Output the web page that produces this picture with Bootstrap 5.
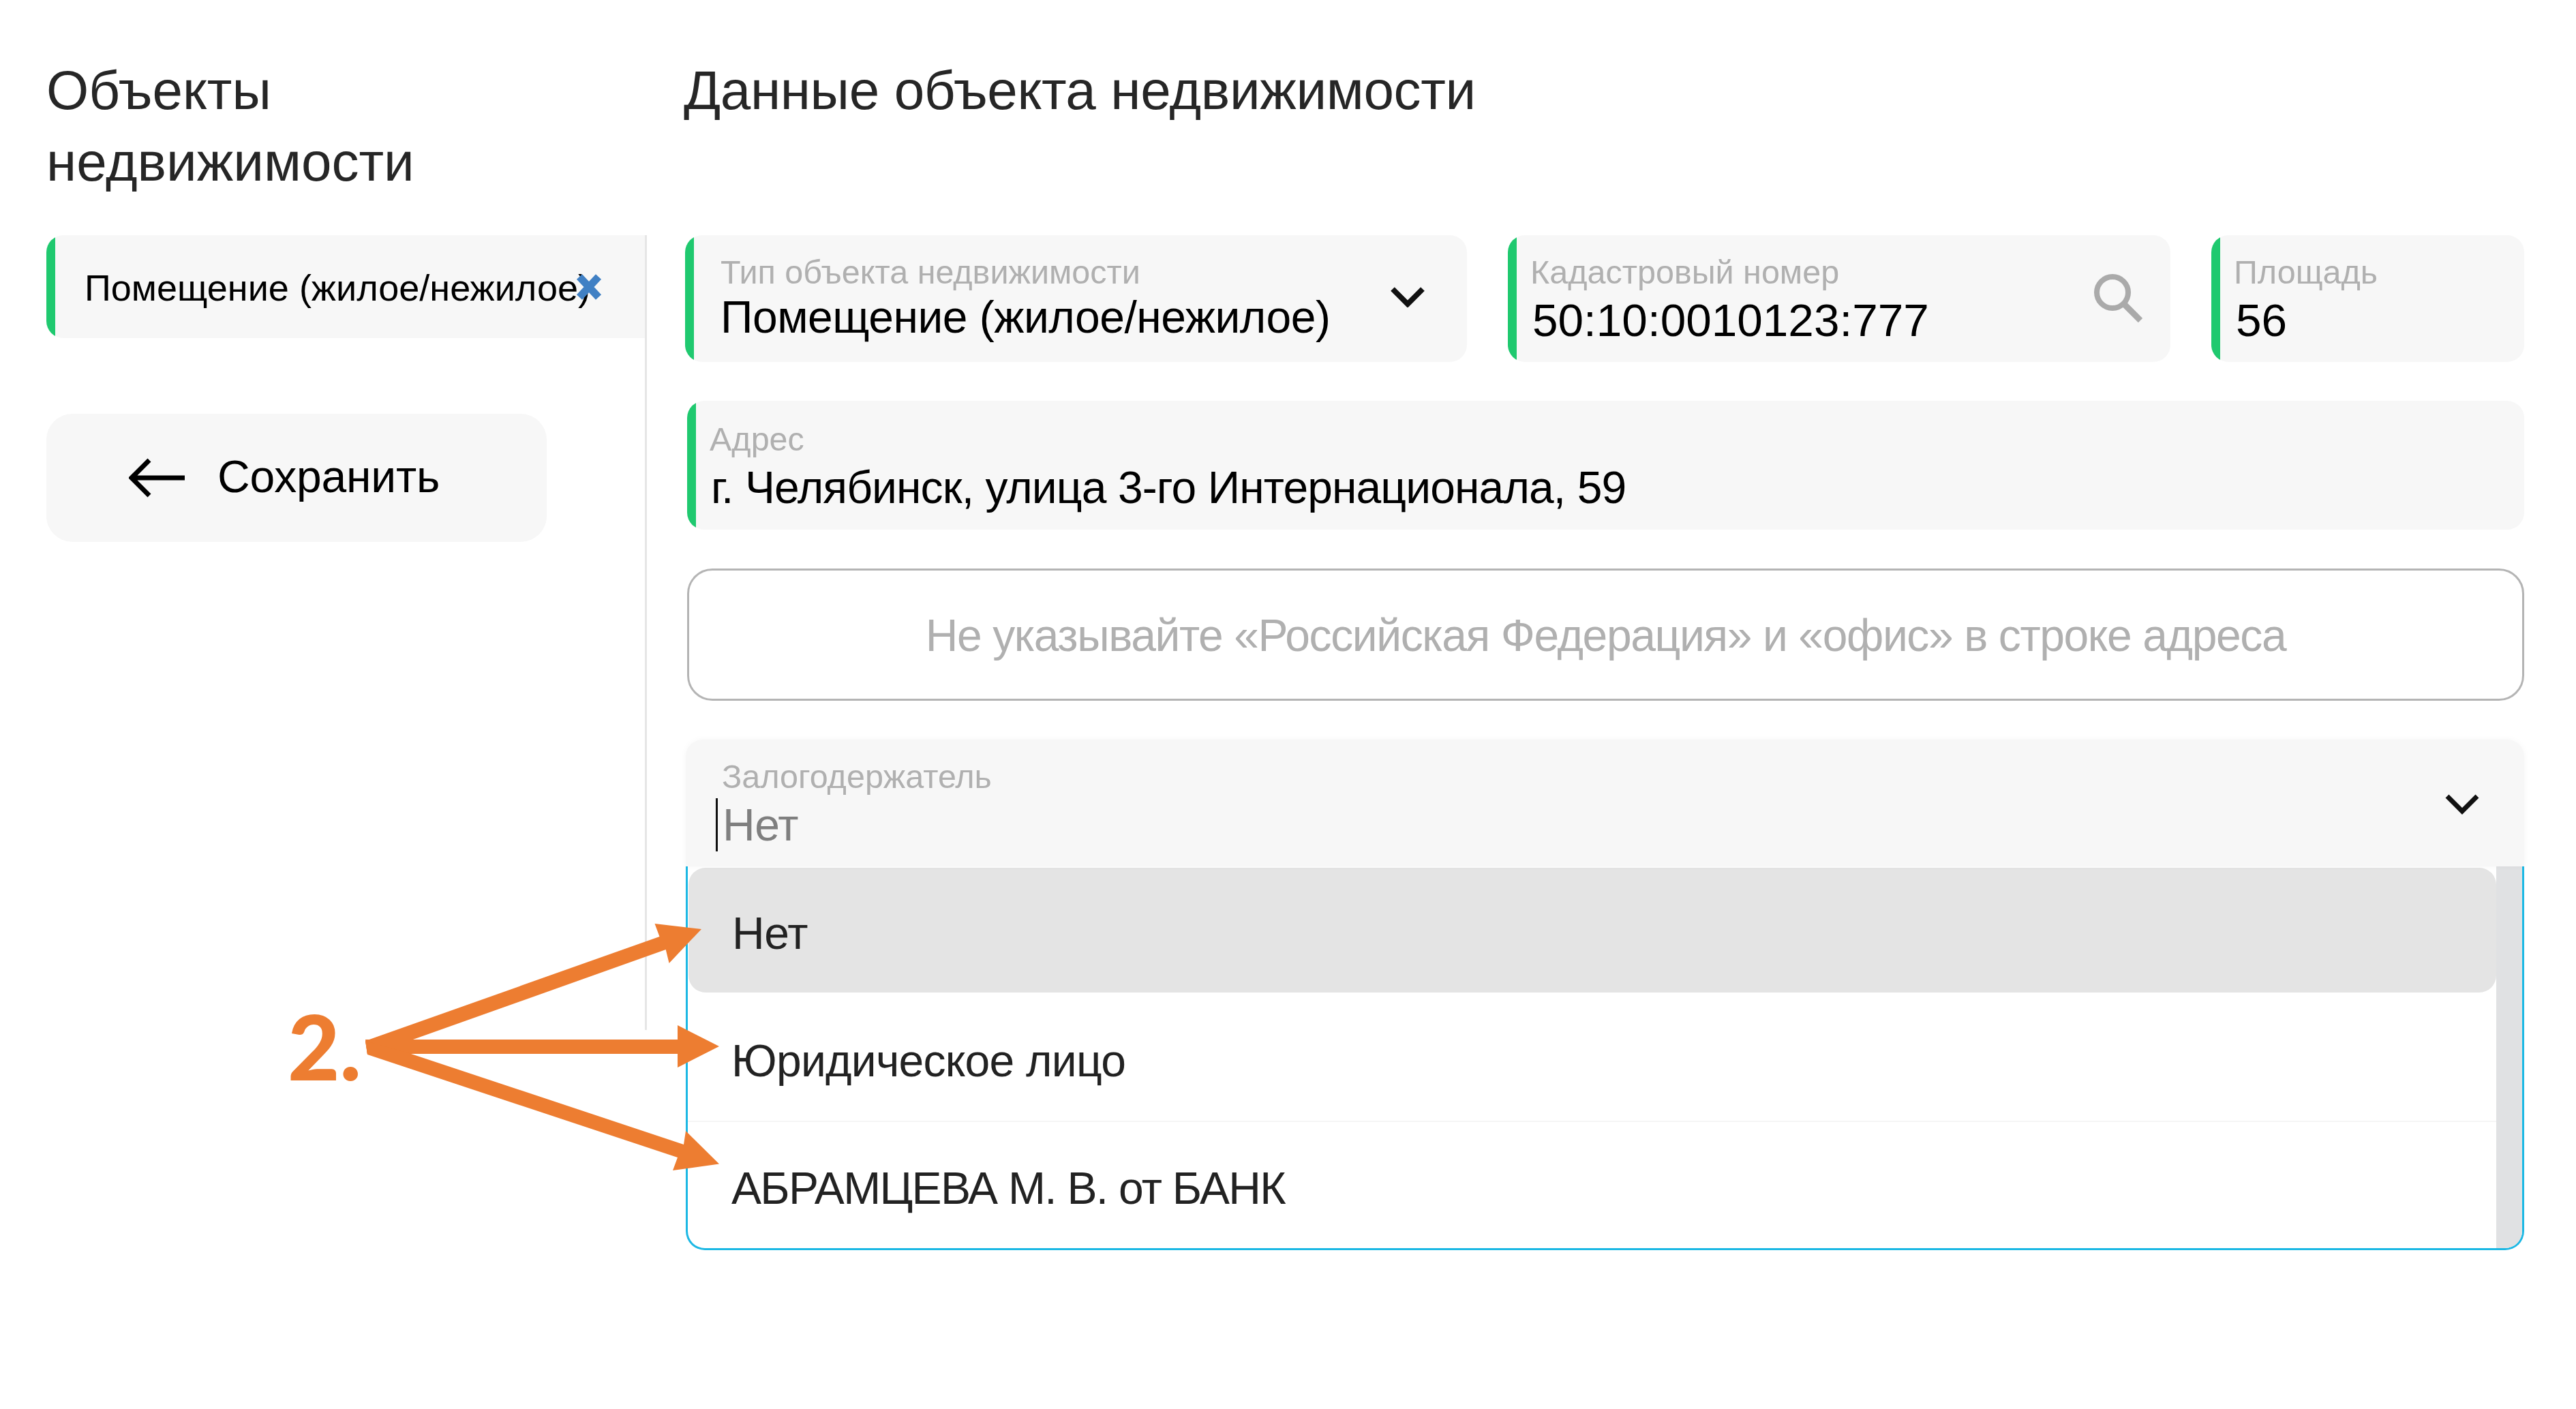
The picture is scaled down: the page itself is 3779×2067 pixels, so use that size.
<!DOCTYPE html>
<html lang="ru">
<head>
<meta charset="utf-8">
<title>Объекты недвижимости</title>
<link rel="stylesheet" href="https://cdn.jsdelivr.net/npm/bootstrap@5.3.0/dist/css/bootstrap.min.css">
<style>
html,body{margin:0;background:#fff;}
body{width:3779px;height:2067px;overflow:hidden;position:relative;font-family:"Liberation Sans",Arial,sans-serif;color:#000;}
.pg{padding:80px 76px 0 68px;}
.side{width:881px;flex:none;}
.ttl{height:210px;margin:0 0 55px;font-size:80px;line-height:105px;font-weight:400;color:#262626;font-family:"Liberation Sans",Arial,sans-serif;}
.ttl-m{letter-spacing:-.36px;}
.side-body{height:1166px;border-right:3px solid #e6e6e6;}
.obj{height:151px;padding-left:56px;padding-top:3px;font-size:54px;white-space:nowrap;border-radius:25px 0 0 25px;background:linear-gradient(to right,#1fc96f 13px,#f7f7f7 13px);}
.obj-x{right:63px;top:56px;width:38px;height:40px;}
.back{margin-top:111px;width:734px;height:188px;border-radius:38px;background:#f7f7f7;border:0;font-size:66px;letter-spacing:-.2px;color:#000;padding:0 0 4px 121px;gap:48px;}
.back:hover{background:#f7f7f7;color:#000;}
.back svg{margin-top:4px;}
.main{margin-left:54px;width:2700px;flex:none;}
.fld{background:#f7f7f7;border-radius:25px;padding-top:26px;}
.grn{background:linear-gradient(to right,#1fc96f 13px,#f7f7f7 13px);}
.f1{width:1147px;height:186px;padding-left:52px;padding-right:62px;}
.f2{width:972px;height:186px;padding-left:33px;padding-right:41px;}
.f3{width:459px;height:186px;padding-left:33px;}
.search{margin-top:30px;}
.row-a{gap:60px;margin-bottom:57px;margin-left:2px;}
.lab{display:block;font-size:48.5px;line-height:56px;color:#b0b0b0;white-space:nowrap;}
.val{display:block;font-size:66px;line-height:76px;color:#000;white-space:nowrap;}
.val-t{letter-spacing:-.5px;}
.val-d{margin-top:5px;}
.val-n{font-size:67.5px;padding-left:3px;}
.val-a{letter-spacing:-.9px;padding-left:2px;}
.f3 .val-n{padding-left:3px;}
.addr{height:189px;margin-left:5px;padding-left:33px;padding-top:28px;margin-bottom:57px;}
.hint{height:194px;margin-left:5px;border:3px solid #b4b4b4;border-radius:37px;font-size:66px;letter-spacing:-1.4px;color:#b0b0b0;margin-bottom:57px;padding-top:3px;}
.dd{margin-left:3px;}
.dd-h{height:186px;padding-left:53px;padding-right:66px;border-radius:25px 25px 0 0;box-shadow:0 0 10px rgba(0,0,0,.04);position:relative;z-index:1;}
.caret-bar{display:inline-block;width:3px;height:78px;background:#111;vertical-align:top;margin:-4px 7px 0 -9px;}
.val-g{color:#7f7f7f;display:flex;margin-top:8px;line-height:70px;letter-spacing:-.5px;}
.dd-chev{margin-top:52px;}
.dd-l{height:563px;border:3px solid #1cb8e4;border-top:0;border-radius:0 0 28px 28px;overflow:hidden;}
.opts{flex:1 1 auto;border-radius:0;}
.opt{border:0;background:transparent;font-size:66px;color:#222;padding:10px 0 0 64px;display:flex;align-items:center;}
.opt-1{height:184px;margin:2px 0 0 1px;border-radius:25px!important;background:#e4e4e4;letter-spacing:-.5px;}
.opt-2{height:190px;border-bottom:2px solid #f5f5f5;letter-spacing:-.75px;padding-top:14px;}
.opt-3{height:186px;letter-spacing:-1.7px;}
.sb{width:38px;flex:none;background:#e0e1e3;}
.num{left:422px;top:1459px;font-family:Lato,"Open Sans",sans-serif;font-weight:900;font-size:132px;line-height:150px;color:#ed7d31;}
.arrows{left:0;top:0;width:3779px;height:2067px;pointer-events:none;}
</style>
</head>
<body>
<div class="pg d-flex align-items-start">
  <aside class="side">
    <h1 class="ttl">Объекты<br>недвижимости</h1>
    <div class="side-body">
      <div class="obj d-flex align-items-center position-relative">
        <span>Помещение (жилое/нежилое)</span>
        <svg class="obj-x position-absolute" viewBox="0 0 38 40"><path d="M5 5 33 35M33 5 5 35" stroke="#4080c4" stroke-width="11" fill="none"/></svg>
      </div>
      <button type="button" class="btn back d-flex align-items-center">
        <svg width="82" height="58" viewBox="0 0 82 58"><path d="M82 29H5M30 3 4 29 30 55" stroke="#000" stroke-width="7" fill="none"/></svg>
        <span>Сохранить</span>
      </button>
    </div>
  </aside>
  <main class="main">
    <h2 class="ttl ttl-m">Данные объекта недвижимости</h2>
    <div class="d-flex row-a">
      <div class="fld grn f1 d-flex justify-content-between">
        <div><span class="lab">Тип объекта недвижимости</span><span class="val val-t">Помещение (жилое/нежилое)</span></div>
        <svg class="mt-5" width="50" height="32" viewBox="0 0 50 32"><path d="M3 5 25 27 47 5" stroke="#111" stroke-width="8" fill="none"/></svg>
      </div>
      <div class="fld grn f2 d-flex justify-content-between">
        <div><span class="lab">Кадастровый номер</span><span class="val val-d val-n">50:10:0010123:777</span></div>
        <svg class="search" width="72" height="72" viewBox="0 0 72 72"><circle cx="28" cy="28" r="23" stroke="#aaa" stroke-width="8" fill="none"/><path d="M44 44 69 69" stroke="#aaa" stroke-width="9" fill="none"/></svg>
      </div>
      <div class="fld grn f3">
        <span class="lab">Площадь</span><span class="val val-d val-n">56</span>
      </div>
    </div>
    <div class="fld grn addr">
      <span class="lab">Адрес</span><span class="val val-d val-a">г. Челябинск, улица 3-го Интернационала, 59</span>
    </div>
    <div class="hint d-flex align-items-center justify-content-center">Не указывайте «Российская Федерация» и «офис» в строке адреса</div>
    <div class="dd">
      <div class="fld dd-h d-flex justify-content-between align-items-start">
        <div><span class="lab">Залогодержатель</span><span class="val val-g"><i class="caret-bar"></i>Нет</span></div>
        <svg class="dd-chev" width="50" height="32" viewBox="0 0 50 32"><path d="M3 5 25 27 47 5" stroke="#111" stroke-width="7" fill="none"/></svg>
      </div>
      <div class="dd-l d-flex">
        <ul class="list-group opts">
          <li class="list-group-item opt opt-1">Нет</li>
          <li class="list-group-item opt opt-2">Юридическое лицо</li>
          <li class="list-group-item opt opt-3">АБРАМЦЕВА М. В. от БАНК</li>
        </ul>
        <div class="sb"></div>
      </div>
    </div>
  </main>
</div>
<div class="num position-absolute">2.</div>
<svg class="arrows position-absolute" viewBox="0 0 3779 2067">
  <polygon fill="#ed7d31" points="536,1527 967.5,1374 960.5,1355 1029,1363 981.6,1413 976.7,1393 603,1526 539,1547"/>
  <polygon fill="#ed7d31" points="536,1525 994,1525 994,1504 1055,1535 994,1566 994,1546 539,1546"/>
  <polygon fill="#ed7d31" points="536,1527 603,1546 1003,1679 1006,1659 1055,1707.5 987,1717 994,1698 539,1547"/>
</svg>
<script src="https://cdn.jsdelivr.net/npm/bootstrap@5.3.0/dist/js/bootstrap.bundle.min.js"></script>
</body>
</html>
